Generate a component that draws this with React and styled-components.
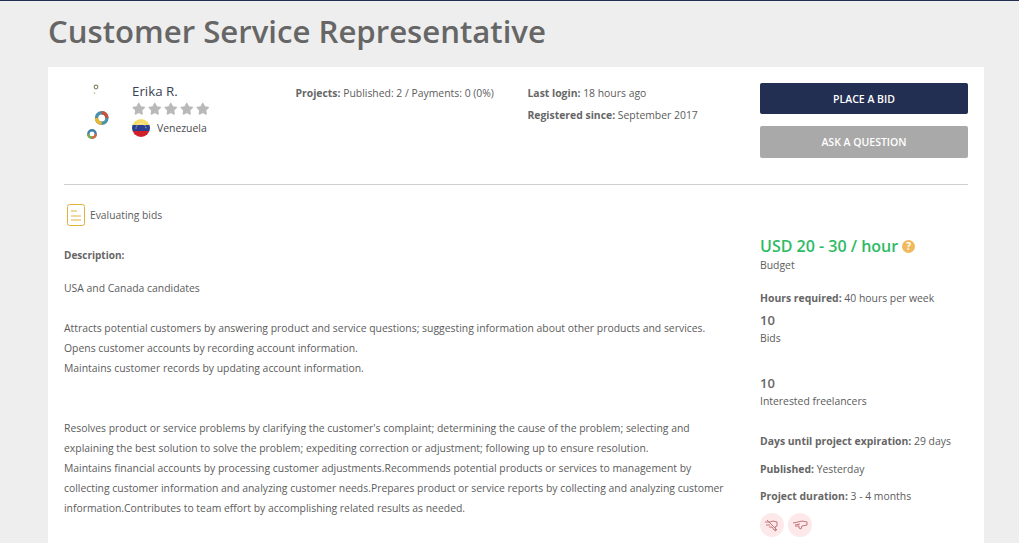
import React from "react";
import styled, { createGlobalStyle } from "styled-components";
import { FaStar } from "react-icons/fa";

const GlobalStyle = createGlobalStyle`
  html, body { margin: 0; padding: 0; height: 543px; overflow: hidden; }
  body { background: #eeeeee; font-family: "Open Sans", "Liberation Sans", sans-serif; color: #5c5c5c; }
`;

const Page = styled.div`
  border-top: 1px solid #232f52;
  padding: 0 35px 0 48px;
  height: 542px;
  overflow: hidden;
`;

const Title = styled.h1`
  margin: 0;
  height: 66px;
  font-size: 31.15px;
  line-height: 60px;
  font-weight: 600;
  color: #666666;
`;

const Card = styled.div`
  background: #fff;
  padding: 0 16px;
  height: 476px;
`;

const Top = styled.div`
  display: flex;
  height: 117px;
  border-bottom: 1px solid #cfcfcf;
`;

const Avatar = styled.svg`
  width: 68px;
  height: 72px;
  flex: none;
  margin-top: 12px;
`;

const Profile = styled.div`
  width: 163.5px;
  flex: none;
  padding-top: 15px;
`;

const Name = styled.div`
  font-size: 13.3px;
  line-height: 18px;
  color: #3a4354;
`;

const Stars = styled.div`
  display: flex;
  gap: 2.5px;
  margin-top: 2px;
  color: #b9b9b9;
  font-size: 13.5px;
  height: 15px;
`;

const Country = styled.div`
  display: flex;
  align-items: center;
  gap: 7px;
  margin-top: 2px;
  font-size: 10.4px;
  color: #4a4a4a;
`;

const Flag = styled.svg`
  width: 18px;
  height: 18px;
`;

const StatColumn = styled.div`
  width: ${(p) => p.$width}px;
  flex: none;
  padding-top: 16px;
`;

const Stat = styled.div`
  font-size: 10.4px;
  line-height: 20px;
  color: #5c5c5c;
  margin-bottom: ${(p) => p.$gap || 0}px;
`;

const Label = styled.b`
  font-weight: 700;
  color: #666;
`;

const HeadLabel = styled(Label)`
  font-size: 10px;
`;

const Actions = styled.div`
  width: 208px;
  flex: none;
  padding-top: 16px;
  display: flex;
  flex-direction: column;
  gap: 12px;
`;

const Button = styled.button`
  height: ${(p) => p.$height}px;
  border: 0;
  border-radius: 2px;
  background: ${(p) => p.$color};
  color: ${(p) => p.$text};
  font-family: inherit;
  font-size: 10.5px;
  font-weight: 600;
  padding: 0;
`;

const Body = styled.div`
  display: flex;
`;

const Main = styled.div`
  width: 696px;
  flex: none;
`;

const Status = styled.div`
  display: flex;
  align-items: center;
  gap: 5px;
  margin: 18px 0 0 3px;
  height: 24px;
  font-size: 10.3px;
  color: #5c5c5c;
`;

const Description = styled.div`
  margin-top: 18px;
  font-size: 10.4px;
  line-height: 20px;
  color: #5c5c5c;
`;

const Para = styled.p`
  margin: 0 0 ${(p) => p.$gap}px;
`;

const Side = styled.div`
  flex: 1;
  padding-top: 49px;
`;

const Budget = styled.div`
  display: flex;
  align-items: center;
  gap: 4px;
  font-size: 16px;
  line-height: 24px;
  font-weight: 600;
  color: #2dbb63;
`;

const Help = styled.span`
  width: 13px;
  height: 13px;
  border-radius: 50%;
  background: #efb95c;
  color: #fff;
  font-size: 10px;
  font-weight: 700;
  line-height: 13px;
  text-align: center;
`;

const SideText = styled.div`
  font-size: 10.4px;
  line-height: 14px;
  margin-bottom: ${(p) => p.$gap || 0}px;
  color: #5c5c5c;
`;

const Count = styled.div`
  font-size: 13px;
  line-height: 18px;
  font-weight: 600;
  color: #666;
  margin-bottom: 2px;
`;

const Badges = styled.div`
  display: flex;
  gap: 4px;
`;

const Badge = styled.span`
  width: 24px;
  height: 24px;
  border-radius: 50%;
  background: #fde9e9;
  display: flex;
  align-items: center;
  justify-content: center;
`;

const BadgeIcon = styled.svg`
  width: 16px;
  height: 16px;
  fill: none;
  stroke: #c4737a;
  stroke-width: 1;
`;

const App = () => (
  <Page>
    <GlobalStyle />
    <Title>Customer Service Representative</Title>
    <Card>
      <Top>
        <Avatar viewBox="0 0 68 72">
          <circle cx="32" cy="8" r="1.8" fill="none" stroke="#8a8a70" strokeWidth="1.2" />
          <circle cx="30.5" cy="14" r="0.8" fill="#b8a878" />
          <circle cx="37.7" cy="39" r="5.2" fill="none" stroke="#4a90a8" strokeWidth="3.4" />
          <path d="M37.7 33.8a5.2 5.2 0 0 1 5.2 5.2" fill="none" stroke="#c8503c" strokeWidth="3.4" />
          <path d="M32.5 39a5.2 5.2 0 0 0 5.2 5.2" fill="none" stroke="#e8b830" strokeWidth="3.4" />
          <circle cx="28" cy="55" r="3.7" fill="none" stroke="#3f7fa8" strokeWidth="2.4" />
          <path d="M31.7 55a3.7 3.7 0 0 1-3.7 3.7" fill="none" stroke="#d8683c" strokeWidth="2.4" />
          <path d="M24.3 55a3.7 3.7 0 0 0 3.7 3.7" fill="none" stroke="#7cae3c" strokeWidth="2.4" />
        </Avatar>
        <Profile>
          <Name>Erika R.</Name>
          <Stars>
            <FaStar />
            <FaStar />
            <FaStar />
            <FaStar />
            <FaStar />
          </Stars>
          <Country>
            <Flag viewBox="0 0 18 18">
              <clipPath id="flag-clip">
                <circle cx="9" cy="9" r="9" />
              </clipPath>
              <g clipPath="url(#flag-clip)">
                <rect width="18" height="6" fill="#f7dc6a" />
                <rect y="6" width="18" height="6" fill="#2a3f8f" />
                <rect y="12" width="18" height="6" fill="#d0202c" />
                <path d="M4 9.5a5 5 0 0 1 10 0" fill="none" stroke="#fff" strokeWidth="0.8" strokeDasharray="1 1" />
              </g>
            </Flag>
            Venezuela
          </Country>
        </Profile>
        <StatColumn $width={232}>
          <Stat>
            <Label>Projects:</Label> Published: 2 / Payments: 0 (0%)
          </Stat>
        </StatColumn>
        <StatColumn $width={232.5}>
          <Stat $gap={2}>
            <Label>Last login:</Label> 18 hours ago
          </Stat>
          <Stat>
            <Label>Registered since:</Label> September 2017
          </Stat>
        </StatColumn>
        <Actions>
          <Button $height={31} $color="#232f52" $text="#fff">PLACE A BID</Button>
          <Button $height={32} $color="#a9a9a9" $text="#fff">ASK A QUESTION</Button>
        </Actions>
      </Top>
      <Body>
        <Main>
          <Status>
            <svg width="18" height="22" viewBox="0 0 18 22" fill="none" stroke="#dfb23f" strokeWidth="1">
              <rect x="0.5" y="0.5" width="17" height="21" rx="2" />
              <path d="M4 7h6M4 12h10M4 16h10" />
            </svg>
            Evaluating bids
          </Status>
          <Description>
            <Para $gap={13}>
              <HeadLabel>Description:</HeadLabel>
            </Para>
            <Para $gap={20}>USA and Canada candidates</Para>
            <Para $gap={0}>
              Attracts potential customers by answering product and service questions; suggesting information about other products and services.
            </Para>
            <Para $gap={0}>Opens customer accounts by recording account information.</Para>
            <Para $gap={40}>Maintains customer records by updating account information.</Para>
            <Para $gap={0}>
              Resolves product or service problems by clarifying the customer's complaint; determining the cause of the problem; selecting and
              <br />
              explaining the best solution to solve the problem; expediting correction or adjustment; following up to ensure resolution.
            </Para>
            <Para $gap={0}>
              Maintains financial accounts by processing customer adjustments.Recommends potential products or services to management by
              <br />
              collecting customer information and analyzing customer needs.Prepares product or service reports by collecting and analyzing customer
              <br />
              information.Contributes to team effort by accomplishing related results as needed.
            </Para>
          </Description>
        </Main>
        <Side>
          <Budget>
            USD 20 - 30 / hour <Help>?</Help>
          </Budget>
          <SideText $gap={19}>Budget</SideText>
          <SideText $gap={6}>
            <Label>Hours required:</Label> 40 hours per week
          </SideText>
          <Count>10</Count>
          <SideText $gap={29}>Bids</SideText>
          <Count>10</Count>
          <SideText $gap={26}>Interested freelancers</SideText>
          <SideText $gap={14}>
            <Label>Days until project expiration:</Label> 29 days
          </SideText>
          <SideText $gap={13}>
            <Label>Published:</Label> Yesterday
          </SideText>
          <SideText $gap={10}>
            <Label>Project duration:</Label> 3 - 4 months
          </SideText>
          <Badges>
            <Badge>
              <BadgeIcon viewBox="0 0 16 16">
                <path d="M1 5h5l3-1 4 1v4l-2 1 1 4-2-1-2-3H5M2 8h4M3 3l10 10" />
              </BadgeIcon>
            </Badge>
            <Badge>
              <BadgeIcon viewBox="0 0 16 16">
                <path d="M1 6l5-1 4-1 5 1v3l-5 1-1 3-2-1V9H3M3 8l5-1" />
              </BadgeIcon>
            </Badge>
          </Badges>
        </Side>
      </Body>
    </Card>
  </Page>
);

export default App;
